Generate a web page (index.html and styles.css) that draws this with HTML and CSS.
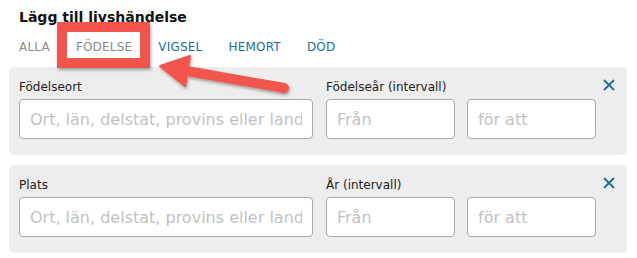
FILE: index.html
```html
<!DOCTYPE html>
<html lang="sv">
<head>
<meta charset="utf-8">
<title>Lägg till livshändelse</title>
<link rel="stylesheet" href="styles.css">
</head>
<body>
<div class="page">
  <h1 class="title">Lägg till livshändelse</h1>
  <nav class="tabs">
    <span class="tab tab-muted">ALLA</span>
    <span class="tab tab-muted">FÖDELSE</span>
    <span class="tab">VIGSEL</span>
    <span class="tab">HEMORT</span>
    <span class="tab">DÖD</span>
  </nav>

  <section class="panel">
    <div class="field field-place">
      <label class="label">Födelseort</label>
      <input class="input" type="text" placeholder="Ort, län, delstat, provins eller land">
    </div>
    <div class="field field-range">
      <label class="label">Födelseår (intervall)</label>
      <div class="range">
        <input class="input input-year" type="text" placeholder="Från">
        <input class="input input-year" type="text" placeholder="för att">
      </div>
    </div>
    <button class="close" aria-label="Stäng">
      <svg width="12" height="12" viewBox="0 0 12 12"><path d="M1 1 L11 11 M11 1 L1 11" stroke="#1b6e93" stroke-width="1.8" fill="none"/></svg>
    </button>
  </section>

  <section class="panel">
    <div class="field field-place">
      <label class="label">Plats</label>
      <input class="input" type="text" placeholder="Ort, län, delstat, provins eller land">
    </div>
    <div class="field field-range">
      <label class="label">År (intervall)</label>
      <div class="range">
        <input class="input input-year" type="text" placeholder="Från">
        <input class="input input-year" type="text" placeholder="för att">
      </div>
    </div>
    <button class="close" aria-label="Stäng">
      <svg width="12" height="12" viewBox="0 0 12 12"><path d="M1 1 L11 11 M11 1 L1 11" stroke="#1b6e93" stroke-width="1.8" fill="none"/></svg>
    </button>
  </section>

  <div class="highlight"></div>
  <svg class="arrow" width="637" height="258" viewBox="0 0 637 258">
    <defs>
      <filter id="sh" x="-10%" y="-30%" width="120%" height="160%">
        <feDropShadow dx="1" dy="2" stdDeviation="1.5" flood-color="#000" flood-opacity="0.35"/>
      </filter>
    </defs>
    <g filter="url(#sh)" fill="#f2544b" stroke="#f2544b">
      <line x1="284" y1="88" x2="184" y2="70.5" stroke-width="10" stroke-linecap="round"/>
      <polygon points="160,66 190,56 185,86" stroke-width="2" stroke-linejoin="round"/>
    </g>
  </svg>
</div>
</body>
</html>
```

FILE: styles.css
```css
* { box-sizing: border-box; }

html, body {
  margin: 0;
  padding: 0;
  background: #ffffff;
}

body {
  font-family: "DejaVu Sans", Verdana, sans-serif;
  color: #222222;
}

.page {
  position: relative;
  width: 637px;
  height: 258px;
  padding: 8px 10px 0 9px;
  overflow: hidden;
}

.title {
  margin: 0 0 13px 10px;
  font-size: 14px;
  line-height: 18px;
  font-weight: bold;
  color: #111111;
}

.tabs {
  display: flex;
  gap: 26px;
  margin: 0 0 12px 10px;
  font-size: 12px;
  line-height: 16px;
  letter-spacing: 0.2px;
}

.tab {
  color: #1b6e93;
}

.tab-muted {
  color: #8a8a8a;
}

.panel {
  display: flex;
  align-items: flex-start;
  height: 88px;
  margin-bottom: 10px;
  padding: 12px 12px 0 10px;
  background: #ecedec;
  border-radius: 5px;
}

.field {
  display: flex;
  flex-direction: column;
  gap: 4px;
}

.field-place {
  width: 294px;
  margin-right: 13px;
}

.label {
  font-size: 12px;
  line-height: 16px;
  color: #222222;
}

.range {
  display: flex;
  gap: 12px;
}

.input {
  width: 294px;
  height: 40px;
  margin: 0;
  padding: 0 10px;
  border: 1px solid #a9a9a9;
  border-radius: 4px;
  background: #ffffff;
  font-family: "DejaVu Sans", Verdana, sans-serif;
  font-size: 16px;
  color: #222222;
  outline: none;
}

.input::placeholder {
  color: #c2c2c2;
}

.input-year {
  width: 129px;
}

.close {
  margin: 0 0 0 7px;
  padding: 0;
  width: 12px;
  height: 12px;
  border: 0;
  background: transparent;
  display: flex;
}

.highlight {
  position: absolute;
  left: 57px;
  top: 22px;
  width: 93px;
  height: 46px;
  border: 10px solid #f2544b;
  box-shadow: 1px 2px 3px rgba(0, 0, 0, 0.35);
}

.arrow {
  position: absolute;
  left: 0;
  top: 0;
  pointer-events: none;
}
```
